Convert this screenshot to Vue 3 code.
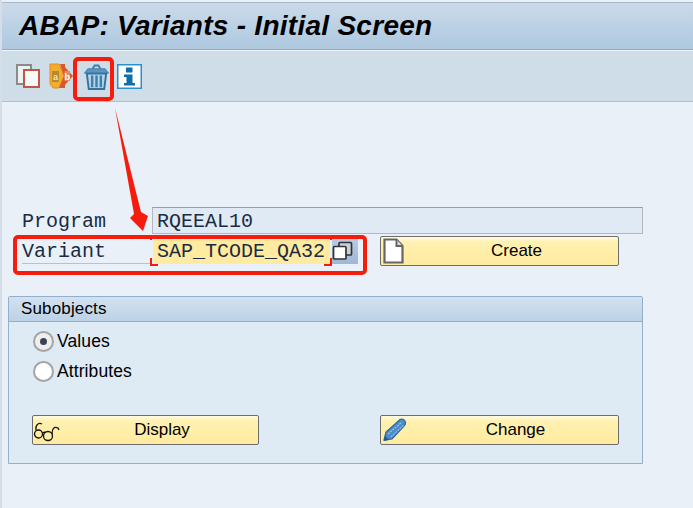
<script setup>
const title = 'ABAP: Variants - Initial Screen'
</script>

<template>
  <div class="screen">
    <header class="titlebar"><h1>{{ title }}</h1></header>
    <div class="toolbar">
      <svg class="tool" width="24" height="24" viewBox="0 0 24 24">
        <rect x="1" y="1" width="14" height="19" fill="#eef1f4" stroke="#8b8b8b" stroke-width="2"/>
        <rect x="8" y="6" width="15" height="17" fill="#f7f8f9" stroke="#c0573f" stroke-width="2"/>
      </svg>
      <svg class="tool t2" width="25" height="26" viewBox="0 0 25 26">
        <path d="M1 1h9l5 12-5 12H4l-3-4z" fill="#f3ad2c" stroke="#e98a22"/>
        <path d="M11 1h5v3l8 9-8 9v3h-6l5-12z" fill="#d9592a"/>
        <rect x="3" y="8" width="7" height="11" fill="#b8892f"/>
        <text x="6.500" y="17" class="ab a">a</text>
        <rect x="15.500" y="8" width="5.500" height="10" fill="#e8895f"/>
        <text x="18.200" y="16.500" class="ab">b</text>
      </svg>
      <svg class="tool t3" width="27" height="27" viewBox="0 0 28 28">
        <path d="M10 5 12 1.500h4L18 5" fill="none" stroke="#3d7fae" stroke-width="2"/>
        <path d="M1.500 9.500 5 5h18l3.500 4.500z" fill="#5c95bd" stroke="#3d7fae"/>
        <path d="M4 10h20l-2 16H6z" fill="#b9d3e6" stroke="#33749f" stroke-width="2"/>
        <path d="M9.500 12v12M14 12v12M18.500 12v12" stroke="#3d7fae" stroke-width="2.500"/>
      </svg>
      <svg class="tool t4" width="25" height="25" viewBox="0 0 25 25">
        <rect x=".75" y=".75" width="23.500" height="23.500" fill="#fff" stroke="#2a90ce" stroke-width="1.500"/>
        <rect x="9" y="3.500" width="6.500" height="5" fill="#0c6fa8"/>
        <path d="M7 10.500h8.500V19H18v2.500H7V19h2.500v-6H7z" fill="#0c6fa8"/>
      </svg>
    </div>

    <main class="content">
      <div class="form">
        <div class="row program">
          <label class="mono label">Program</label>
          <div class="mono field display-field">RQEEAL10</div>
        </div>
        <div class="row variant">
          <label class="mono label underlined">Variant</label>
          <div class="mono field input-field">SAP_TCODE_QA32</div>
          <div class="match">
            <svg width="21" height="20" viewBox="0 0 21 20">
              <rect x="7" y="1.500" width="12.500" height="12.500" rx="1" fill="#c9d2dc" stroke="#333" stroke-width="1.700"/>
              <rect x="1.500" y="5.500" width="12.500" height="12.500" rx="1" fill="#fff" stroke="#333" stroke-width="1.700"/>
            </svg>
          </div>
          <button class="btn create-btn">
            <svg class="btn-icon doc" width="21" height="26" viewBox="0 0 21 26">
              <path d="M1.500 1.500h12l6 6.500v16.500h-18z" fill="#fff" stroke="#666" stroke-width="2.200"/>
              <path d="M13.500 1.500v6.500h6" fill="#ddd" stroke="#666" stroke-width="2"/>
            </svg>
            Create
          </button>
        </div>
      </div>

      <section class="group">
        <div class="group-head">Subobjects</div>
        <div class="group-body">
          <div class="radio-row"><span class="radio on"><i></i></span>Values</div>
          <div class="radio-row"><span class="radio"></span>Attributes</div>
          <div class="actions">
            <button class="btn display-btn">
              <svg class="btn-icon glasses" width="28" height="24" viewBox="0 0 28 24">
                <g fill="none" stroke="#111" stroke-width="1.300">
                  <circle cx="5.500" cy="15" r="4"/>
                  <circle cx="15" cy="17" r="4.500"/>
                  <path d="M9.500 14c1.500-1 2.500-1 3.500-.5M3 11C2 7 5 3 9 5M19 15c0-5 2-8 6-6l1 2"/>
                </g>
              </svg>
              Display
            </button>
            <button class="btn change-btn">
              <svg class="btn-icon pencil" width="24" height="24" viewBox="0 0 24 24">
                <path d="M1 22 3 14 17 1.500c1.500-1 5-.5 5.500 3 .2 1-.2 2-1 3L9 21z" fill="#4d8cc6" stroke="#2a6aa0" stroke-width="1.200"/>
                <path d="M5 16 19 4M8 19 21 7" stroke="#9cc3e3" stroke-width="1.200" stroke-dasharray="2 1"/>
                <path d="M1 23 2 18l4 4z" fill="#1e5b8c"/>
              </svg>
              Change
            </button>
          </div>
        </div>
      </section>
    </main>

    <!-- Annotations drawn over the screenshot -->
    <div class="mark mark-trash"></div>
    <div class="mark mark-row"></div>
    <span class="corner c-tl"></span><span class="corner c-bl"></span>
    <span class="corner c-tr"></span><span class="corner c-br"></span>
    <svg class="arrow" width="36" height="130" viewBox="0 0 36 130">
      <path d="M1 0 27 104 34 108 29 123 16 110 20 106z" fill="#f61c0d"/>
    </svg>
  </div>
</template>

<style>
html, body { margin: 0; background: #e9f0f8; }
</style>

<style scoped>
.screen {
  position: relative;
  width: 693px;
  height: 508px;
  overflow: hidden;
  background: #e9f0f8;
  box-sizing: border-box;
  padding: 2px 0 0 2px;
  font-family: "Liberation Sans", Arial, sans-serif;
  color: #000;
  box-shadow: inset 2px 0 0 #d5dde9;
}
.titlebar {
  height: 48px;
  box-sizing: border-box;
  background: linear-gradient(#cbdaea, #aec8df);
  border-top: 1px solid #a9b9c9;
  border-bottom: 1px solid #8fabc6;
  padding-left: 17px;
  display: flex;
  align-items: center;
}
h1 {
  margin: 0;
  font-size: 28px;
  font-weight: bold;
  font-style: italic;
  line-height: 46px;
  letter-spacing: .27px;
}
.toolbar {
  height: 52px;
  box-sizing: border-box;
  background: #cfdde9;
  border-top: 1px solid #eef3f8;
  border-bottom: 1px solid #aebfd0;
  display: flex;
  align-items: center;
  padding: 0 0 0 14px;
}
.tool { flex: none; }
.t2 { margin-left: 9px; }
.t3 { margin-left: 9px; margin-top: 2px; }
.t4 { margin-left: 7px; }
.form {
  padding: 105px 0 0 20px;
  display: flex;
  flex-direction: column;
}
.row { display: flex; align-items: flex-start; }
.program { height: 31px; }
.mono {
  font-family: "Liberation Mono", "Courier New", monospace;
  font-size: 20px;
  color: #1a2b44;
}
.label {
  width: 130px;
  box-sizing: border-box;
  height: 27px;
  line-height: 29px;
  flex: none;
}
.field {
  box-sizing: border-box;
  padding-left: 5px;
  line-height: 27px;
}
.display-field {
  width: 491px;
  height: 27px;
  background: #dfeaf4;
  border: 1px solid #b0b8c0;
  border-top-color: #969ea6;
  padding-left: 4px;
}
.underlined { border-bottom: 1px solid #b9c2cb; height: 26px; line-height: 28px; }
.input-field {
  width: 177px;
  height: 26px;
  margin-left: 1px;
  background: #ffeb9f;
  padding-left: 4px;
  white-space: nowrap;
  line-height: 28px;
}
.match {
  width: 26px;
  height: 26px;
  margin-left: 2px;
  background: linear-gradient(#b8cce3, #9fb8d6);
  display: flex;
  align-items: center;
  justify-content: flex-start;
  flex: none;
}
.btn {
  position: relative;
  box-sizing: border-box;
  height: 30px;
  padding: 0;
  border: 1px solid #6d6d6d;
  border-radius: 2px;
  background: linear-gradient(#fffbe2 0, #fff1b0 18%, #ffeba0 100%);
  font-family: "Liberation Sans", Arial, sans-serif;
  font-size: 17px;
  color: #000;
}
.create-btn { width: 239px; margin-left: 22px; margin-top: -2px; padding-left: 34px; }
.btn-icon { position: absolute; }
.doc { left: 2px; top: 1px; }
.glasses { left: 0; top: 3px; }
.pencil { left: 2px; top: 2px; }
.group {
  margin: 30px 0 0 6px;
  width: 635px;
  height: 168px;
  box-sizing: border-box;
  border: 1px solid #93afce;
  border-top-left-radius: 2px;
  border-top-right-radius: 2px;
  background: #deeaf4;
}
.group-head {
  height: 25px;
  box-sizing: border-box;
  padding-left: 12px;
  line-height: 24px;
  font-size: 17px;
  letter-spacing: .15px;
  background: linear-gradient(#d3e1ef, #bcd2e7);
  border-bottom: 1px solid #93afce;
}
.group-body { padding: 4px 0 0 24px; }
.radio-row {
  display: flex;
  align-items: center;
  height: 30px;
  font-size: 17.500px;
  letter-spacing: .1px;
}
.radio {
  box-sizing: border-box;
  width: 21px;
  height: 21px;
  margin-right: 3px;
  border-radius: 50%;
  background: #fff;
  border: 2px solid #a4a4a4;
  display: flex;
  align-items: center;
  justify-content: center;
}
.radio i {
  width: 7px;
  height: 7px;
  border-radius: 50%;
  background: #3c4252;
}
.radio.on { background: #eee; }
.actions {
  margin-top: 29px;
  display: flex;
  gap: 121px;
  margin-left: -1px;
}
.display-btn { width: 227px; padding-left: 33px; }
.change-btn { width: 239px; padding-left: 32px; }
.mark {
  position: absolute;
  box-sizing: border-box;
  border: 4px solid #f61c0d;
  pointer-events: none;
}
.mark-trash { left: 73px; top: 57px; width: 41px; height: 44px; border-radius: 5px; }
.mark-row { left: 13px; top: 235px; width: 354px; height: 40px; border-radius: 5px; }
.corner { position: absolute; width: 8px; height: 8px; box-sizing: border-box; border: 0 solid #f61c0d; }
.c-tl { left: 150px; top: 238px; border-left-width: 2px; width: 2px; height: 2px; }
.c-bl { left: 150px; top: 258px; border-left-width: 2px; border-bottom-width: 2px; }
.c-tr { left: 324px; top: 238px; border-right-width: 2px; width: 8px; height: 2px; }
.c-br { left: 324px; top: 258px; border-right-width: 2px; border-bottom-width: 2px; }
.arrow { position: absolute; left: 114px; top: 108px; }
.ab { font: bold 9px "Liberation Sans", sans-serif; fill: #fff; text-anchor: middle; }
.ab.a { fill: #f5e6b0; }
</style>
